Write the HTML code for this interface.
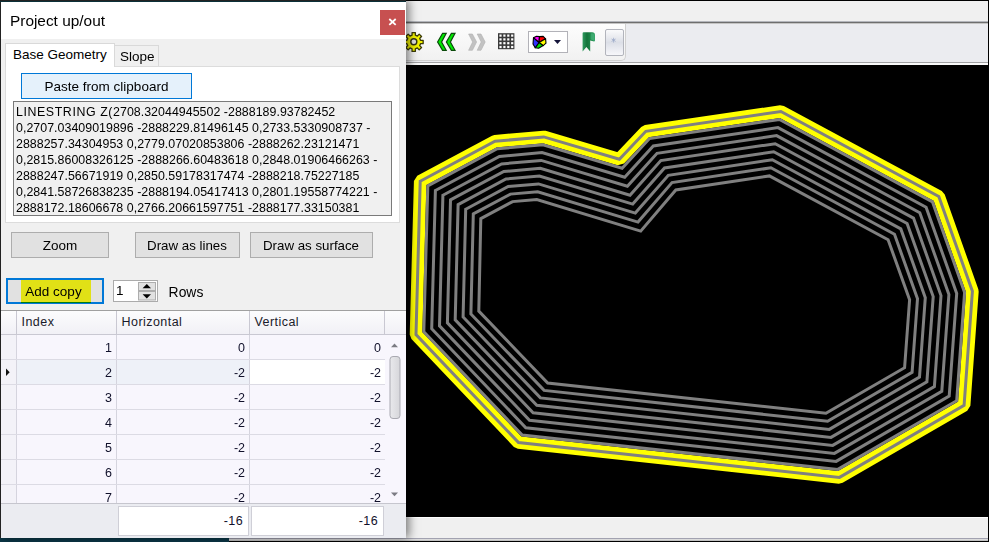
<!DOCTYPE html>
<html><head><meta charset="utf-8"><title>Project up/out</title>
<style>
html,body{margin:0;padding:0;}
body{width:989px;height:542px;overflow:hidden;position:relative;background:#f0f0f0;font-family:"Liberation Sans",sans-serif;color:#000;}
.abs{position:absolute;}
#main-top{left:0;top:0;width:989px;height:22px;background:#f0f0f0;}
#topline{left:0;top:0;width:989px;height:1px;background:#000;}
#topline2{left:0;top:1px;width:406px;height:1px;background:#0c3038;z-index:5;}
#sep1{left:405px;top:21px;width:584px;height:3px;background:linear-gradient(#b4b6bc 0,#b4b6bc 33%,#6e6e6e 33%,#6e6e6e 67%,#c4c4c4 67%);}
#tbarbg{left:405px;top:24px;width:584px;height:38px;background:#ebecf0;}
#tbar{left:396px;top:24px;width:230px;height:37px;background:linear-gradient(#fdfdfd,#f1f1f1);border-radius:0 0 5px 0;border-right:1px solid #d0d0d0;border-bottom:1px solid #d0d0d0;box-sizing:border-box;}
#canvas{left:405px;top:64.9px;width:584px;height:451.9px;background:#000;}
#tbl1{left:405px;top:63px;width:584px;height:2px;background:#fafafa;}
#tbl2{left:405px;top:62px;width:584px;height:1.2px;background:#a2a2a4;}
#rborder{left:988px;top:0;width:1px;height:542px;background:#000;z-index:6;}
#status{left:405px;top:516.8px;width:584px;height:22px;background:linear-gradient(#fff 0,#fff 5%,#f0f0f0 6%,#f0f0f0 100%);}
#bottomline{left:0;top:537.6px;width:989px;height:4.4px;background:linear-gradient(#a2a2b0 0,#a2a2b0 30%,#dcdcdc 34%,#dcdcdc 62%,#000 66%);}
#teal{left:0;top:538.2px;width:229px;height:4px;background:#0b3747;}
#dlg{left:0;top:0;width:406px;height:538.2px;background:#f0f0f0;box-shadow:3px 0 9px rgba(0,0,0,.5);border-left:1px solid #222;border-top:1px solid #222;box-sizing:border-box;}
#title{left:1px;top:1px;width:405px;height:38px;background:#fff;}
#title span{position:absolute;left:9px;top:9.5px;font-size:15.4px;line-height:20px;color:#000;}
#close{left:380px;top:10px;width:24.8px;height:24.9px;background:#c75050;color:#fff;}
.tab{box-sizing:border-box;border:1px solid #d9d9d9;border-bottom:none;font-size:13.5px;}
#tab1{left:5px;top:43px;width:110px;height:24px;background:#fff;z-index:2;}
#tab2{left:114px;top:45px;width:45px;height:21px;background:#f0f0f0;}
#page{left:5px;top:66px;width:395px;height:157px;background:#fff;border:1px solid #dcdcdc;box-sizing:border-box;}
.btn{box-sizing:border-box;border:1px solid #adadad;background:#e1e1e1;font-size:13.5px;text-align:center;}
#paste{left:21px;top:73px;width:171px;height:26px;background:#e5f1fb;border:1px solid #0078d7;line-height:25.5px;}
#ta{left:13px;top:101px;width:379px;height:115px;background:#f0f0f0;border:1px solid #7a7a7a;box-sizing:border-box;font-size:12.4px;line-height:16px;white-space:nowrap;overflow:hidden;padding:2.4px 0 0 2px;letter-spacing:.03px;}
#ta div{height:16px;}
#bzoom{left:11px;top:232px;width:98px;height:26px;line-height:25px;}
#blines{left:135px;top:232px;width:105px;height:26px;line-height:25px;font-size:13.3px;padding-right:1px;}
#bsurf{left:250px;top:232px;width:123px;height:26px;line-height:25px;font-size:13.3px;padding-right:1px;}
#badd{left:6px;top:278px;width:98px;height:26px;border:2px solid #0078d7;line-height:23px;padding-right:3px;}
#hl{left:21px;top:280px;width:70px;height:23px;background:#ffff00;mix-blend-mode:multiply;opacity:.9;}
#spin{left:113px;top:280px;width:45px;height:22px;background:#fff;border:1px solid #ababab;box-sizing:border-box;}
#spin span{position:absolute;left:2px;top:2px;font-size:13.5px;line-height:16px;}
#rows{left:168.6px;top:283.5px;font-size:13.9px;line-height:16px;}
#grid{left:1px;top:310px;width:405px;height:194px;background:#f8f6fd;border-top:1px solid #a0a0a0;box-sizing:border-box;overflow:hidden;font-size:12.5px;}
.hdr{top:0;height:24px;background:linear-gradient(#fcfcfd,#f1f0f6);border-right:1px solid #c9c8d2;border-bottom:1px solid #c9c8d2;box-sizing:border-box;line-height:22px;padding-left:4.5px;color:#1a1a2a;letter-spacing:.45px;}
.row{left:0;width:384px;height:25px;border-bottom:1px solid #dcdbe4;box-sizing:border-box;}
.c{position:absolute;top:0;height:24px;line-height:26px;text-align:right;box-sizing:border-box;border-right:1px solid #d5d4de;padding-right:4px;color:#10102a;}
.c0{left:0;width:16px;background:#f3f2f8;}
.c1{left:16px;width:100px;}
.c2{left:116px;width:133px;}
.c3{left:249px;width:135px;border-right:none;}
#foot{left:1px;top:503px;width:405px;height:35.2px;background:#ebecf1;border-top:1px solid #c6c6ce;box-sizing:border-box;}
.sum{top:506px;height:30px;background:#fff;border:1px solid #cfcfd7;box-sizing:border-box;text-align:right;font-size:12.5px;line-height:28.5px;padding-right:5px;letter-spacing:.4px;color:#10102a;}
</style></head><body>
<div id="main-top" class="abs"></div>
<div id="sep1" class="abs"></div>
<div id="tbarbg" class="abs"></div>
<div id="tbar" class="abs"></div>
<div id="tbl1" class="abs"></div><div id="tbl2" class="abs"></div><div id="canvas" class="abs"></div>
<div id="status" class="abs"></div>
<svg class="abs" style="left:0;top:0" width="989" height="542" viewBox="0 0 989 542">
<polygon points="420.2,181.2 495.0,141.3 543.8,136.9 619.4,159.2 645.8,131.3 780.9,111.5 938.8,196.5 972.4,291.3 964.1,405.4 839.5,477.4 518.5,442.6 416.0,334.6" fill="none" stroke="#ffff00" stroke-width="12.6" stroke-linejoin="bevel"/>
<polygon points="420.2,181.2 495.0,141.3 543.8,136.9 619.4,159.2 645.8,131.3 780.9,111.5 938.8,196.5 972.4,291.3 964.1,405.4 839.5,477.4 518.5,442.6 416.0,334.6" fill="none" stroke="#808080" stroke-width="3" stroke-linejoin="miter"/>
<polygon points="427.8,185.9 497.2,148.8 542.9,144.7 622.1,168.2 649.5,138.6 779.5,119.5 932.5,201.9 964.6,292.4 956.7,400.7 837.8,469.4 522.2,435.1 423.8,331.7" fill="none" stroke="#808080" stroke-width="3" stroke-linejoin="miter"/>
<polygon points="435.4,190.5 499.4,156.4 542.0,152.6 624.7,177.2 653.3,146.0 778.0,127.6 926.1,207.3 956.7,293.4 949.2,396.0 836.1,461.4 525.8,427.7 431.7,328.7" fill="none" stroke="#808080" stroke-width="3" stroke-linejoin="miter"/>
<polygon points="442.9,195.2 501.6,163.9 541.2,160.4 627.4,186.2 657.0,153.3 776.6,135.6 919.8,212.7 948.9,294.5 941.8,391.3 834.4,453.4 529.5,420.2 439.5,325.8" fill="none" stroke="#808080" stroke-width="3" stroke-linejoin="miter"/>
<polygon points="450.5,199.9 503.8,171.5 540.3,168.3 630.0,195.2 660.8,160.6 775.2,143.7 913.5,218.1 941.0,295.6 934.4,386.5 832.7,445.4 533.1,412.8 447.4,322.8" fill="none" stroke="#808080" stroke-width="3" stroke-linejoin="miter"/>
<polygon points="458.1,204.6 506.0,179.0 539.4,176.1 632.7,204.1 664.5,168.0 773.7,151.7 907.1,223.5 933.2,296.6 926.9,381.8 831.0,437.4 536.8,405.3 455.2,319.9" fill="none" stroke="#808080" stroke-width="3" stroke-linejoin="miter"/>
<polygon points="465.7,209.2 508.2,186.5 538.5,183.9 635.3,213.1 668.3,175.3 772.3,159.8 900.8,228.9 925.3,297.7 919.5,377.1 829.3,429.4 540.4,397.9 463.1,317.0" fill="none" stroke="#808080" stroke-width="3" stroke-linejoin="miter"/>
<polygon points="473.3,213.9 510.4,194.1 537.7,191.8 638.0,222.1 672.0,182.6 770.9,167.8 894.5,234.3 917.5,298.8 912.1,372.4 827.6,421.3 544.1,390.4 470.9,314.0" fill="none" stroke="#808080" stroke-width="3" stroke-linejoin="miter"/>
<polygon points="480.8,218.6 512.6,201.6 536.8,199.6 640.7,231.1 675.8,190.0 769.4,175.9 888.1,239.7 909.6,299.8 904.6,367.7 825.9,413.3 547.7,383.0 478.8,311.1" fill="none" stroke="#808080" stroke-width="3" stroke-linejoin="miter"/>
</svg>

<svg class="abs" style="left:0;top:0" width="989" height="70" viewBox="0 0 989 70">
<path d="M423.16 40.35 L423.16 43.65 L420.51 43.63 L419.67 45.66 L421.55 47.52 L419.22 49.85 L417.36 47.97 L415.33 48.81 L415.35 51.46 L412.05 51.46 L412.07 48.81 L410.04 47.97 L408.18 49.85 L405.85 47.52 L407.73 45.66 L406.89 43.63 L404.24 43.65 L404.24 40.35 L406.89 40.37 L407.73 38.34 L405.85 36.48 L408.18 34.15 L410.04 36.03 L412.07 35.19 L412.05 32.54 L415.35 32.54 L415.33 35.19 L417.36 36.03 L419.22 34.15 L421.55 36.48 L419.67 38.34 L420.51 40.37Z" fill="#f2f200" stroke="#3a3a08" stroke-width="1.3" stroke-linejoin="round"/>
<circle cx="413.8" cy="41.8" r="3" fill="#e4e4e4" stroke="#33331a" stroke-width="1.4"/>
<g fill="#00ea00" stroke="#0a4a0a" stroke-width="1.2">
<path d="M442.6 33.3 L446.2 33.3 L441.6 42 L446.2 50.3 L442.6 50.3 L437.6 42Z"/>
<path d="M451.4 33.3 L455 33.3 L450.4 42 L455 50.3 L451.4 50.3 L446.4 42Z"/>
</g>
<g fill="#c2c2c2" stroke="#b0b0b0" stroke-width="0.6">
<path d="M468.6 34 L472.4 34 L476.6 42 L472.4 50.3 L468.6 50.3 L472.6 42Z"/>
<path d="M477.2 34 L481 34 L485.2 42 L481 50.3 L477.2 50.3 L481.2 42Z"/>
</g>
<rect x="498" y="33.2" width="16.4" height="16" fill="#3a3a3a"/>
<g fill="#fff">
<rect x="499.4" y="34.5" width="2.2" height="2.2"/><rect x="499.4" y="38.3" width="2.2" height="2.2"/><rect x="499.4" y="42.1" width="2.2" height="2.2"/><rect x="499.4" y="45.9" width="2.2" height="2.2"/><rect x="503.3" y="34.5" width="2.2" height="2.2"/><rect x="503.3" y="38.3" width="2.2" height="2.2"/><rect x="503.3" y="42.1" width="2.2" height="2.2"/><rect x="503.3" y="45.9" width="2.2" height="2.2"/><rect x="507.2" y="34.5" width="2.2" height="2.2"/><rect x="507.2" y="38.3" width="2.2" height="2.2"/><rect x="507.2" y="42.1" width="2.2" height="2.2"/><rect x="507.2" y="45.9" width="2.2" height="2.2"/><rect x="511.1" y="34.5" width="2.2" height="2.2"/><rect x="511.1" y="38.3" width="2.2" height="2.2"/><rect x="511.1" y="42.1" width="2.2" height="2.2"/><rect x="511.1" y="45.9" width="2.2" height="2.2"/>
</g>
<rect x="528.5" y="31.5" width="39" height="21" fill="#fff" stroke="#b2b2b8" stroke-width="1"/>
<g stroke="#000" stroke-width="1.1" stroke-linejoin="round">
<path d="M539 42.5 L533.5 37.8 L536.5 36.2 L539.5 36.6Z" fill="#ff00ff"/>
<path d="M539 42.5 L539.5 36.6 L543.2 36.4 L545.6 38.8Z" fill="#ff0000"/>
<path d="M539 42.5 L545.6 38.8 L546 43.2 L543.2 45.6Z" fill="#ffff00"/>
<path d="M539 42.5 L543.2 45.6 L538.6 48.2 L535.2 47.8Z" fill="#00e000"/>
<path d="M539 42.5 L535.2 47.8 L533 44 L533.5 37.8Z" fill="#3030ff"/>
</g>
<path d="M554 40 L561 40 L557.5 44Z" fill="#15153a"/>
<defs><linearGradient id="rb" x1="0" y1="0" x2="1" y2="0"><stop offset="0" stop-color="#2e9a5e"/><stop offset="0.35" stop-color="#13733a"/><stop offset="0.7" stop-color="#1f8a4c"/><stop offset="1" stop-color="#3aa86c"/></linearGradient></defs>
<path d="M582.6 33.2 Q582.6 32.3 583.6 32.3 L592.2 32.3 Q595 32.3 595 35 L595 40.6 Q595 41.6 594 41.4 L590.2 40.6 L590.2 51.6 L586.4 47 L582.6 51.6Z" fill="url(#rb)"/>
<path d="M590.6 33.4 Q594.2 32.8 594.2 35.4 L594.2 40.4 L590.6 39.6Z" fill="#46b47a" opacity=".7"/>
<defs><linearGradient id="bg1" x1="0" y1="0" x2="0" y2="1"><stop offset="0" stop-color="#fbfbfc"/><stop offset="0.5" stop-color="#dcdfe7"/><stop offset="1" stop-color="#f8f8fb"/></linearGradient></defs>
<rect x="605.5" y="29.5" width="18" height="26" rx="1.5" fill="url(#bg1)" stroke="#b2b4bc" stroke-width="1"/>
<g stroke="#9aa8c8" stroke-width="0.8"><path d="M613.6 37.8 L613.6 42.6 M611.6 39 L615.6 41.4 M615.6 39 L611.6 41.4"/></g>
</svg>
<div id="topline" class="abs"></div><div id="rborder" class="abs"></div><div id="topline2" class="abs"></div>
<div id="bottomline" class="abs"></div><div id="teal" class="abs"></div>
<div id="dlg" class="abs"></div>
<div id="title" class="abs"><span>Project up/out</span></div>
<div id="close" class="abs"><svg width="24" height="24" viewBox="0 0 24 24"><path d="M9.3 9 L15.7 14.8 M15.7 9 L9.3 14.8" stroke="#fff" stroke-width="1.8" fill="none"/></svg></div>
<div id="page" class="abs"></div>
<div id="tab1" class="abs tab"><span class="abs" style="left:7px;top:3px;line-height:16px;white-space:nowrap">Base Geometry</span></div>
<div id="tab2" class="abs tab"><span class="abs" style="left:5px;top:3px;line-height:16px">Slope</span></div>
<div id="paste" class="abs btn">Paste from clipboard</div>
<div id="ta" class="abs">
<div><span style="letter-spacing:.58px">LINESTRING Z(</span>2708.32044945502 -2888189.93782452</div>
<div>0,2707.03409019896 -2888229.81496145 0,2733.5330908737 -</div>
<div>2888257.34304953 0,2779.07020853806 -2888262.23121471</div>
<div>0,2815.86008326125 -2888266.60483618 0,2848.01906466263 -</div>
<div>2888247.56671919 0,2850.59178317474 -2888218.75227185</div>
<div>0,2841.58726838235 -2888194.05417413 0,2801.19558774221 -</div>
<div>2888172.18606678 0,2766.20661597751 -2888177.33150381</div>
</div>
<div id="bzoom" class="abs btn">Zoom</div>
<div id="blines" class="abs btn">Draw as lines</div>
<div id="bsurf" class="abs btn">Draw as surface</div>
<div id="badd" class="abs btn">Add copy</div>
<div id="hl" class="abs"></div>
<div id="spin" class="abs"><span>1</span></div>
<div id="rows" class="abs">Rows</div>
<div id="grid" class="abs">
<div class="abs hdr" style="left:0;width:16px;padding:0"></div>
<div class="abs hdr" style="left:16px;width:100px;">Index</div>
<div class="abs hdr" style="left:116px;width:133px;">Horizontal</div>
<div class="abs hdr" style="left:249px;width:135px;">Vertical</div>
<div class="abs hdr" style="left:384px;width:21px;border-right:none"></div>
<div class="abs row" style="top:24px;"><div class="c c0"></div><div class="c c1">1</div><div class="c c2">0</div><div class="c c3">0</div></div>
<div class="abs row" style="top:49px;background:#eef1f8;"><div class="c c0"></div><div class="c c1">2</div><div class="c c2">-2</div><div class="c c3" style="background:#fff">-2</div></div>
<div class="abs row" style="top:74px;"><div class="c c0"></div><div class="c c1">3</div><div class="c c2">-2</div><div class="c c3">-2</div></div>
<div class="abs row" style="top:99px;"><div class="c c0"></div><div class="c c1">4</div><div class="c c2">-2</div><div class="c c3">-2</div></div>
<div class="abs row" style="top:124px;"><div class="c c0"></div><div class="c c1">5</div><div class="c c2">-2</div><div class="c c3">-2</div></div>
<div class="abs row" style="top:149px;"><div class="c c0"></div><div class="c c1">6</div><div class="c c2">-2</div><div class="c c3">-2</div></div>
<div class="abs row" style="top:174px;"><div class="c c0"></div><div class="c c1">7</div><div class="c c2">-2</div><div class="c c3">-2</div></div>
</div>
<svg class="abs" style="left:0;top:270px" width="405" height="160" viewBox="0 270 405 160">
<rect x="138.5" y="282.5" width="17" height="8" fill="#e1e1e1" stroke="#adadad"/>
<rect x="138.5" y="291.5" width="17" height="8.5" fill="#e1e1e1" stroke="#adadad"/>
<path d="M142.6 288.3 L151 288.3 L146.8 284Z" fill="#000"/>
<path d="M142.6 294.2 L151 294.2 L146.8 298.4Z" fill="#000"/>
<path d="M6 368.6 L9.7 372.3 L6 376Z" fill="#111"/>
<path d="M391 347.2 L398 347.2 L394.5 343.4Z" fill="#7c7c84"/>
<defs><linearGradient id="th" x1="0" y1="0" x2="1" y2="0"><stop offset="0" stop-color="#e9e9ec"/><stop offset="1" stop-color="#d6d6da"/></linearGradient></defs>
<rect x="390" y="356.5" width="10" height="62" rx="3" fill="url(#th)" stroke="#a9a9b1"/>
</svg>
<svg class="abs" style="left:385px;top:480px" width="20" height="24" viewBox="385 480 20 24"><path d="M391 492.5 L398 492.5 L394.5 496.3Z" fill="#7c7c84"/></svg>
<div id="foot" class="abs"></div>
<div class="abs sum" style="left:118px;width:131px;">-16</div>
<div class="abs sum" style="left:251px;width:133px;">-16</div>
</body></html>
